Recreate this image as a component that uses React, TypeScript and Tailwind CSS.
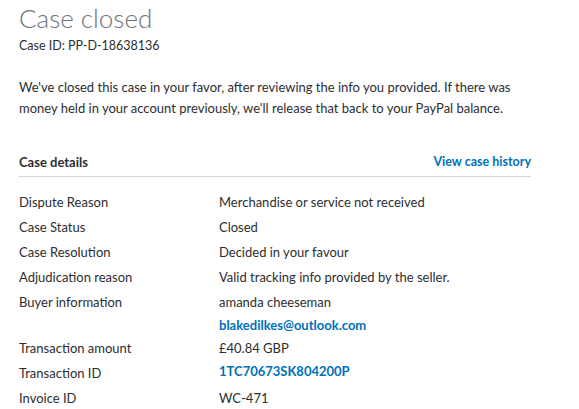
export default function App() {
    const rows: { label: string; value: string[]; link?: boolean[] }[] = [
        { label: "Dispute Reason", value: ["Merchandise or service not received"] },
        { label: "Case Status", value: ["Closed"] },
        { label: "Case Resolution", value: ["Decided in your favour"] },
        { label: "Adjudication reason", value: ["Valid tracking info provided by the seller."] },
        { label: "Buyer information", value: ["amanda cheeseman", "blakedilkes@outlook.com"], link: [false, true] },
        { label: "Transaction amount", value: ["£40.84 GBP"] },
        { label: "Transaction ID", value: ["1TC70673SK804200P"], link: [true] },
        { label: "Invoice ID", value: ["WC-471"] },
    ];

    return (
        <div className="min-h-[409px] w-[579px] bg-white px-[19px] text-[#2c2e2f] [font-family:Lato,'Liberation_Sans',sans-serif]">
            <h1 className="pt-[2px] text-[26px] font-light leading-[32px] text-[#6c7378]">Case closed</h1>
            <p className="mt-[4px] text-[12.5px] leading-[16px]">Case ID: PP-D-18638136</p>

            <p className="mt-[23px] w-[520px] text-[13px] leading-[21px]">
                We've closed this case in your favor, after reviewing the info you provided. If there was money held in your account previously, we'll release that back to your PayPal balance.
            </p>

            <div className="mt-[34px] w-[512px]">
                <div className="flex items-center justify-between border-b border-[#d5d5d5] pb-[3px]">
                    <span className="text-[13px] font-bold">Case details</span>
                    <a className="text-[12.5px] font-bold text-[#0070ba]">View case history</a>
                </div>

                <div className="mt-[13px] flex flex-col">
                    {rows.map(row => (
                        <div key={row.label} className="flex text-[13px]">
                            <div className="w-[200px] leading-[25px]">{row.label}</div>
                            <div className="flex flex-col">
                                {row.value.map((v, i) => (
                                    <span
                                        key={v}
                                        className={row.link?.[i] ? "font-bold leading-[21px] text-[#0070ba]" : "leading-[25px]"}
                                    >
                                        {v}
                                    </span>
                                ))}
                            </div>
                        </div>
                    ))}
                </div>
            </div>
        </div>
    );
}
